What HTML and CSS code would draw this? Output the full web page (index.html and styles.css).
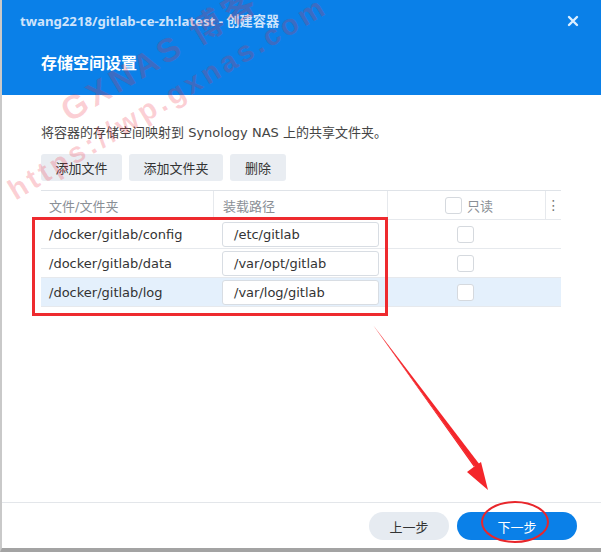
FILE: index.html
```html
<!DOCTYPE html>
<html lang="zh">
<head>
<meta charset="utf-8">
<title>创建容器</title>
<link rel="stylesheet" href="styles.css">
</head>
<body>
<div class="dialog">
  <header class="head">
    <div class="head-top">
      <span class="title">twang2218/gitlab-ce-zh:latest - 创建容器</span>
      <svg class="close" width="12" height="12" viewBox="0 0 12 12"><path d="M2 2L10 10M10 2L2 10" stroke="#dcefff" stroke-width="2.4" stroke-linecap="round"/></svg>
    </div>
    <h1 class="step">存储空间设置</h1>
  </header>
  <main class="content">
    <p class="desc">将容器的存储空间映射到 Synology NAS 上的共享文件夹。</p>
    <div class="toolbar">
      <button class="tbtn">添加文件</button>
      <button class="tbtn">添加文件夹</button>
      <button class="tbtn">删除</button>
    </div>
    <div class="table">
      <div class="row hrow">
        <div class="cell c1">文件/文件夹</div>
        <div class="cell c2 sep">装载路径</div>
        <div class="cell c3 sep"><span class="chk"></span>只读</div>
        <div class="cell c4 sep"><span class="kebab">⋮</span></div>
      </div>
      <div class="row">
        <div class="cell c1">/docker/gitlab/config</div>
        <div class="cell c2"><div class="inp">/etc/gitlab</div></div>
        <div class="cell c3 center"><span class="chk"></span></div>
        <div class="cell c4"></div>
      </div>
      <div class="row">
        <div class="cell c1">/docker/gitlab/data</div>
        <div class="cell c2"><div class="inp">/var/opt/gitlab</div></div>
        <div class="cell c3 center"><span class="chk"></span></div>
        <div class="cell c4"></div>
      </div>
      <div class="row sel">
        <div class="cell c1">/docker/gitlab/log</div>
        <div class="cell c2"><div class="inp">/var/log/gitlab</div></div>
        <div class="cell c3 center"><span class="chk white"></span></div>
        <div class="cell c4"></div>
      </div>
    </div>
  </main>
  <footer class="foot">
    <button class="fbtn prev">上一步</button>
    <button class="fbtn next">下一步</button>
  </footer>

  <div class="watermark wm1">GXNAS 博客</div>
  <div class="watermark wm2">https://wp.gxnas.com</div>

  <div class="mark-rect"></div>
  <svg class="mark-arrow" width="601" height="552" viewBox="0 0 601 552">
    <path d="M373 325 L475 466 L467 472 L488 490 L481 462 L474 467 Z" fill="#f4262b"/>
    <path d="M373 325 L476 468 L480 465 Z" fill="#f4262b"/>
    <ellipse cx="515" cy="522" rx="33" ry="20" fill="none" stroke="#e8262b" stroke-width="2"/>
  </svg>
</div>
</body>
</html>
```
FILE: styles.css
```css
* { box-sizing: border-box; }
html, body { margin: 0; padding: 0; }
body {
  width: 601px;
  height: 552px;
  overflow: hidden;
  background: #fff;
  font-family: "DejaVu Sans", "Noto Sans CJK SC", sans-serif;
  color: #333;
}
.dialog {
  position: relative;
  width: 601px;
  height: 552px;
  display: flex;
  flex-direction: column;
  border-left: 2px solid #c9c9c9;
  border-bottom: 4px solid #a3a3a3;
  background: #fff;
  overflow: hidden;
}
.head {
  height: 95px;
  margin-left: -2px;
  background: #0a80e8;
  flex: none;
}
.head-top {
  display: flex;
  align-items: center;
  justify-content: space-between;
  padding: 11px 22px 0 20px;
  height: 30px;
}
.title {
  font-family: "Noto Sans", "Noto Sans CJK SC", sans-serif;
  font-size: 13.2px;
  font-weight: 700;
  color: #cfe4fb;
}
.close { display: block; }
.step {
  margin: 22px 0 0 41px;
  font-family: "Noto Sans", "Noto Sans CJK SC", sans-serif;
  font-size: 16px;
  line-height: 22px;
  font-weight: 700;
  color: #fff;
}
.content {
  flex: 1;
  padding: 29px 0 0 39px;
}
.desc {
  margin: 0;
  font-size: 13px;
  line-height: 18px;
  color: #444;
}
.toolbar {
  display: flex;
  gap: 7px;
  margin-top: 12px;
}
.tbtn {
  height: 27px;
  border: 0;
  border-radius: 3px;
  background: #e9edf2;
  font-family: inherit;
  font-size: 13px;
  color: #333;
  padding: 0 13px;
}
.tbtn:nth-child(1) { width: 81px; }
.tbtn:nth-child(2) { width: 94px; }
.tbtn:nth-child(3) { width: 56px; }
.table {
  margin-top: 9px;
  width: 520px;
  border-top: 1px solid #dfe3e8;
}
.row {
  display: flex;
  height: 29px;
  border-bottom: 1px solid #e6e9ed;
  align-items: center;
  font-size: 13px;
}
.row.sel { background: #e4f0fc; }
.hrow { color: #8a8f96; }
.cell {
  height: 100%;
  display: flex;
  align-items: center;
}
.c1 { width: 172px; padding-left: 8px; }
.c2 { width: 174px; padding-left: 9px; }
.c3 { width: 158px; }
.c4 { width: 16px; justify-content: center; }
.sep { border-left: 1px solid #e6e9ed; }
.hrow .c3 { padding-left: 57px; }
.center { padding-left: 70px; }
.chk {
  display: inline-block;
  width: 17px;
  height: 17px;
  border: 1px solid #d5d9de;
  border-radius: 3px;
  background: #fff;
  margin-right: 5px;
}
.kebab { color: #777; font-size: 14px; }
.inp {
  width: 157px;
  height: 25px;
  border: 1px solid #d8dde3;
  border-radius: 3px;
  background: #fff;
  padding-left: 11px;
  display: flex;
  align-items: center;
  color: #333;
}
.foot {
  flex: none;
  height: 46px;
  border-top: 1px solid #e3e6ea;
  display: flex;
  justify-content: flex-end;
  align-items: flex-start;
  gap: 8px;
  padding: 9px 24px 0 0;
}
.fbtn {
  height: 28px;
  border: 0;
  border-radius: 14px;
  font-family: inherit;
  font-size: 13px;
}
.prev { width: 80px; background: #e6ebf1; color: #333; }
.next { width: 120px; background: #0a80e8; color: #fff; }

.watermark {
  position: absolute;
  font-family: "Liberation Sans", "Noto Sans CJK SC", sans-serif;
  font-weight: 700;
  line-height: 1;
  color: rgba(240, 40, 60, 0.22);
  transform-origin: left bottom;
  transform: rotate(-31deg);
  white-space: nowrap;
  pointer-events: none;
}
.wm1 { left: 70px; top: 94px; font-size: 33px; letter-spacing: 4px; }
.wm2 { left: 16px; top: 176px; font-size: 29px; letter-spacing: 3.5px; }
.mark-rect {
  position: absolute;
  left: 30px;
  top: 217px;
  width: 356px;
  height: 99px;
  border: 3px solid #ee2a2f;
}
.mark-arrow {
  position: absolute;
  left: -2px;
  top: 0;
}
```
